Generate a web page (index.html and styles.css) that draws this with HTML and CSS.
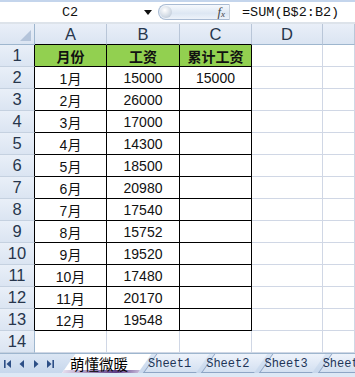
FILE: index.html
```html
<!DOCTYPE html>
<html lang="zh">
<head>
  <meta charset="UTF-8">
  <title>萌懂微暖</title>
  <link rel="stylesheet" href="styles.css">
</head>
<body>
  <div class="book">
    <!-- Formula bar -->
    <div class="formula-bar">
      <div class="name-box">C2</div>
      <div class="name-drop">
        <svg width="8" height="5" viewBox="0 0 8 5"><path d="M0 0h8L4 5z" fill="#111"/></svg>
      </div>
      <div class="fx-pill">
        <span class="knob"></span>
        <span class="fx">f<sub>x</sub></span>
      </div>
      <div class="formula">=SUM(B$2:B2)</div>
    </div>

    <!-- Grid -->
    <table class="sheet">
      <colgroup>
        <col style="width:35px"><col style="width:72px"><col style="width:73px">
        <col style="width:72px"><col style="width:71px"><col>
      </colgroup>
      <thead>
        <tr>
          <th class="corner"><span class="tri"></span></th>
          <th class="col-head edge">A</th>
          <th class="col-head edge">B</th>
          <th class="col-head edge">C</th>
          <th class="col-head">D</th>
          <th class="col-head"></th>
        </tr>
      </thead>
      <tbody id="rows"></tbody>
    </table>

    <!-- Sheet tabs -->
    <div class="tab-bar">
      <div class="tab-nav">
        <svg width="60" height="14" viewBox="0 0 60 14">
          <g fill="#2d4f86">
            <rect x="4" y="3" width="1.6" height="8"/><path d="M11 3v8L6.5 7z"/>
            <path d="M24 3v8L19.5 7z"/>
            <path d="M34 3v8L38.5 7z"/>
            <path d="M47 3v8L51.5 7z"/><rect x="52.4" y="3" width="1.6" height="8"/>
          </g>
        </svg>
      </div>
      <div class="tab active"><span>萌懂微暖</span></div>
      <div class="tab"><span>Sheet1</span></div>
      <div class="tab"><span>Sheet2</span></div>
      <div class="tab"><span>Sheet3</span></div>
      <div class="tab"><span>Sheet4</span></div>
    </div>
    <div class="status-strip"></div>
  </div>

  <script>
    // Monthly salary data
    const salaries = [15000, 26000, 17000, 14300, 18500, 20980, 17540, 15752, 19520, 17480, 20170, 19548];
    const body = document.getElementById('rows');

    function addRow(num, cells, boxed) {
      const tr = document.createElement('tr');
      const th = document.createElement('th');
      th.className = 'row-head' + (boxed ? ' edge' : '');
      th.textContent = num;
      tr.appendChild(th);
      cells.forEach((text, i) => {
        const td = document.createElement('td');
        td.textContent = text;
        if (boxed && i < 3) td.className = 'boxed';
        if (num === 1 && i < 3) td.className = 'boxed title';
        tr.appendChild(td);
      });
      body.appendChild(tr);
    }

    addRow(1, ['月份', '工资', '累计工资', '', ''], true);
    salaries.forEach((s, i) => {
      addRow(i + 2, [(i + 1) + '月', s, i === 0 ? '15000' : '', '', ''], true);
    });
    addRow(14, ['', '', '', '', ''], false);
  </script>
</body>
</html>
```

FILE: styles.css
```css
body {
  margin: 0;
  padding: 0;
  background-color: #ffffff;
  font-family: "Liberation Sans", "Noto Sans CJK SC", sans-serif;
  overflow: hidden;
}

.book {
  width: 355px;
  height: 377px;
  overflow: hidden;
}

.formula-bar {
  display: flex;
  align-items: center;
  height: 20px;
  border-top: 2px solid #c4d5ec;
  border-bottom: 2px solid #dde3ea;
  background-color: #ffffff;
  font-family: "Liberation Mono", monospace;
  font-size: 13.5px;
  color: #111;
}

.name-box {
  width: 140px;
  text-align: center;
}

.name-drop {
  width: 18px;
  display: flex;
  align-items: center;
  justify-content: flex-start;
  padding-left: 4px;
  box-sizing: border-box;
}

.fx-pill {
  display: flex;
  align-items: center;
  justify-content: space-between;
  width: 72px;
  height: 16px;
  box-sizing: border-box;
  border: 1px solid #a9bbd3;
  border-radius: 9px 0 0 9px;
  border-right: 1px solid #c9d2dd;
  background: linear-gradient(#f6f9fd, #dde7f3 60%, #eef3fa);
  padding: 0 4px 0 1px;
}

.knob {
  width: 12px;
  height: 12px;
  border-radius: 50%;
  background: radial-gradient(circle at 40% 35%, #ffffff, #c9d3df 70%, #aab6c6);
}

.fx {
  font-family: "Liberation Serif", serif;
  font-style: italic;
  font-size: 13px;
  color: #444;
}

.fx sub {
  font-size: 9px;
  vertical-align: -1px;
}

.formula {
  padding-left: 12px;
}

.sheet {
  border-collapse: separate;
  border-spacing: 0;
  table-layout: fixed;
  width: 355px;
}

.sheet th {
  background: linear-gradient(#e9eff8, #dbe5f2);
  font-weight: normal;
  color: #27364c;
  font-size: 16.5px;
  padding: 0;
}

.col-head {
  height: 20px;
  border-right: 1px solid #b9c6d8;
  border-bottom: 1px solid #9eb6ce;
  line-height: 18px;
}

.col-head.edge {
  border-bottom-color: #000;
}

.corner {
  position: relative;
  border-right: 1px solid #9eb6ce;
  border-bottom: 1px solid #9eb6ce;
}

.corner .tri {
  position: absolute;
  right: 3px;
  bottom: 3px;
  width: 0;
  height: 0;
  border-left: 11px solid transparent;
  border-bottom: 11px solid #b4c4da;
}

.row-head {
  height: 21px;
  border-right: 1px solid #9eb6ce;
  border-bottom: 1px solid #c5d1e0;
  text-align: center;
}

.row-head.edge {
  border-right-color: #000;
}

.sheet td {
  height: 21px;
  padding: 0;
  border-right: 1px solid #d0d7e5;
  border-bottom: 1px solid #d0d7e5;
  text-align: center;
  font-size: 14px;
  color: #111;
}

.sheet td.boxed {
  border-right-color: #000;
  border-bottom-color: #000;
}

.sheet td.title {
  background-color: #92d050;
  font-weight: bold;
}

.tab-bar {
  display: flex;
  align-items: stretch;
  height: 19px;
  background: linear-gradient(#dbe6f4, #c7d7ec);
  border-top: 1px solid #9eb6ce;
  overflow: hidden;
}

.tab-nav {
  width: 62px;
  display: flex;
  align-items: center;
}

.tab {
  position: relative;
  display: flex;
  align-items: center;
  padding: 0 5px 0 11px;
  margin-right: -1px;
  font-family: "Liberation Mono", monospace;
  font-size: 12px;
  color: #1e3557;
  flex-shrink: 0;
}

.tab::before {
  content: "";
  position: absolute;
  left: 6px;
  right: 0;
  top: 0;
  bottom: 0;
  transform: skewX(-35deg);
  transform-origin: bottom left;
  background: linear-gradient(#eef3fb, #d3e0f1);
  border-left: 1px solid #8ea5c5;
  border-bottom: 1px solid #8ea5c5;
}

.tab span {
  position: relative;
}

.tab.active {
  padding: 0 10px 0 10px;
  font-family: "Noto Sans CJK SC", sans-serif;
  font-size: 14.5px;
  color: #000;
  z-index: 1;
}

.tab.active::before {
  left: 2px;
  background: #ffffff;
  border-bottom: 3px solid #6f4f96;
  border-image: linear-gradient(to right, #e8e0f0, #5e3d86 70%, #c9bcdc) 1;
  border-left-width: 0;
  border-top-width: 0;
  border-right-width: 0;
}

.status-strip {
  height: 5px;
  background-color: #dde8f5;
}
```
